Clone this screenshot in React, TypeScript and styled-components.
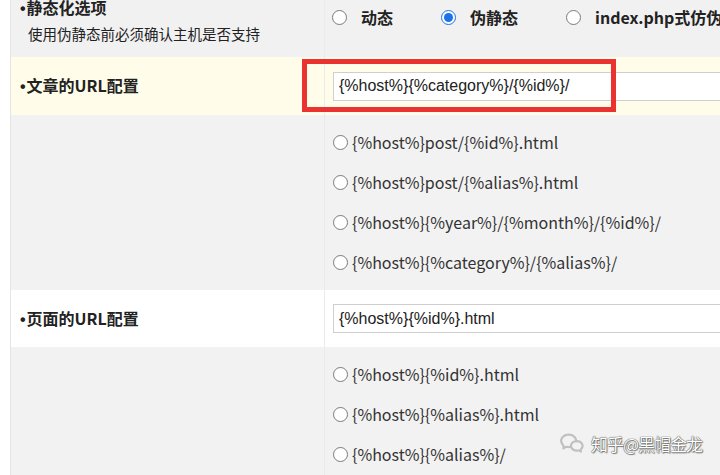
import styled, { createGlobalStyle } from "styled-components"
import { RiWechatLine } from "react-icons/ri"

const GlobalStyle = createGlobalStyle`
  html, body {
    margin: 0;
    padding: 0;
    background: #fff;
    overflow: hidden;
  }
  * { box-sizing: border-box; }
`

const articleOptions = [
  "{%host%}post/{%id%}.html",
  "{%host%}post/{%alias%}.html",
  "{%host%}{%year%}/{%month%}/{%id%}/",
  "{%host%}{%category%}/{%alias%}/",
]

const pageOptions = [
  "{%host%}{%id%}.html",
  "{%host%}{%alias%}.html",
  "{%host%}{%alias%}/",
]

const App = () => {
  return (
    <>
      <GlobalStyle />
      <Page>
        <Table>
          <Row bg="#f1f1f1" h={69}>
            <Label top>
              <Title><Dot>•</Dot>静态化选项</Title>
              <Sub>使用伪静态前必须确认主机是否支持</Sub>
            </Label>
            <Value top>
              <ModeGroup>
                <Mode>
                  <Radio />
                  <span>动态</span>
                </Mode>
                <Mode>
                  <Radio checked />
                  <span>伪静态</span>
                </Mode>
                <Mode>
                  <Radio />
                  <span>index.php式仿伪静态</span>
                </Mode>
              </ModeGroup>
            </Value>
          </Row>

          <Row bg="#fffde9" h={58}>
            <Label>
              <Title><Dot>•</Dot>文章的URL配置</Title>
            </Label>
            <Value>
              <InputWrap>
                <Input defaultValue="{%host%}{%category%}/{%id%}/" />
                <Highlight />
              </InputWrap>
            </Value>
          </Row>

          <Row bg="#f2f2f2" h={175}>
            <Label />
            <Value>
              <OptionList>
                {articleOptions.map((o) => (
                  <Option key={o}>
                    <Radio />
                    <span>{o}</span>
                  </Option>
                ))}
              </OptionList>
            </Value>
          </Row>

          <Row bg="#ffffff" h={57}>
            <Label>
              <Title><Dot>•</Dot>页面的URL配置</Title>
            </Label>
            <Value>
              <InputWrap>
                <Input defaultValue="{%host%}{%id%}.html" />
              </InputWrap>
            </Value>
          </Row>

          <Row bg="#f2f2f2" h={140}>
            <Label />
            <Value>
              <OptionList>
                {pageOptions.map((o) => (
                  <Option key={o}>
                    <Radio />
                    <span>{o}</span>
                  </Option>
                ))}
              </OptionList>
            </Value>
          </Row>
        </Table>

        <Watermark>
          <RiWechatLine size={26} />
          <span>知乎@黑帽金龙</span>
        </Watermark>
      </Page>
    </>
  )
}

export default App

const Page = styled.div`
  position: relative;
  width: 720px;
  height: 475px;
  overflow: hidden;
  padding-left: 10px;
  background: #fff;
  font-family: "Noto Sans CJK SC", "Noto Sans", sans-serif;
  color: #333;
`

const Table = styled.div`
  margin-top: -12px;
  border-left: 1px solid #e4e4e4;
  display: flex;
  flex-direction: column;
`

const Row = styled.div<{ bg: string; h: number }>`
  display: grid;
  grid-template-columns: 314px 1fr;
  height: ${(p) => p.h}px;
  background: ${(p) => p.bg};
`

const Label = styled.div<{ top?: boolean }>`
  display: flex;
  flex-direction: column;
  justify-content: ${(p) => (p.top ? "flex-start" : "center")};
  padding: ${(p) => (p.top ? "8px 0 0 9px" : "0 0 0 9px")};
  border-right: 1px solid #ebebeb;
`

const Title = styled.div`
  font-size: 16px;
  font-weight: 700;
  line-height: 22px;
  color: #222;
  white-space: nowrap;
`

const Dot = styled.span`
  font-family: "Liberation Sans", Arial, sans-serif;
  font-weight: 700;
  margin-right: 1px;
`

const Sub = styled.div`
  font-size: 14.5px;
  line-height: 20px;
  margin-top: 4px;
  padding-left: 8px;
  color: #222;
`

const Value = styled.div<{ top?: boolean }>`
  display: flex;
  align-items: ${(p) => (p.top ? "flex-start" : "center")};
  padding: ${(p) => (p.top ? "18px 0 0 7px" : "0 0 0 8px")};
  min-width: 0;
`

const ModeGroup = styled.div`
  display: flex;
  align-items: center;
  gap: 48px;
  white-space: nowrap;
`

const Mode = styled.label`
  display: flex;
  align-items: center;
  gap: 14px;
  font-size: 16px;
  font-weight: 700;
  line-height: 22px;
  color: #222;
`

const Radio = styled.span<{ checked?: boolean }>`
  position: relative;
  flex: none;
  width: 15px;
  height: 15px;
  border-radius: 50%;
  background: #fff;
  border: 1px solid ${(p) => (p.checked ? "#1a73e8" : "#7a7a7a")};

  &::after {
    content: "";
    display: ${(p) => (p.checked ? "block" : "none")};
    position: absolute;
    left: 2px;
    top: 2px;
    width: 9px;
    height: 9px;
    border-radius: 50%;
    background: #1a73e8;
  }
`

const InputWrap = styled.div`
  position: relative;
  flex: none;
`

const Input = styled.input`
  display: block;
  width: 460px;
  height: 29px;
  padding: 0 5px;
  border: 1px solid #cfcfcf;
  background: #fff;
  font-family: "Liberation Sans", Arial, sans-serif;
  font-size: 16px;
  color: #222;
  outline: none;
`

const Highlight = styled.div`
  position: absolute;
  left: -31px;
  top: -13px;
  width: 314px;
  height: 53px;
  border: 5px solid #ea3331;
  pointer-events: none;
`

const OptionList = styled.div`
  align-self: flex-start;
  padding-top: 7px;
  display: flex;
  flex-direction: column;
`

const Option = styled.label`
  display: flex;
  align-items: center;
  gap: 4px;
  height: 40px;
  font-size: 16px;
  color: #333;
  white-space: nowrap;
`

const Watermark = styled.div`
  position: absolute;
  left: 559px;
  top: 430px;
  display: flex;
  align-items: center;
  gap: 6px;
  color: #ffffff;
  font-size: 17px;
  letter-spacing: -1px;
  text-shadow: 0 0 1px #444, 0 0 1px #444, 1px 1px 1px #888;

  svg {
    color: #c0c0c0;
  }
`
